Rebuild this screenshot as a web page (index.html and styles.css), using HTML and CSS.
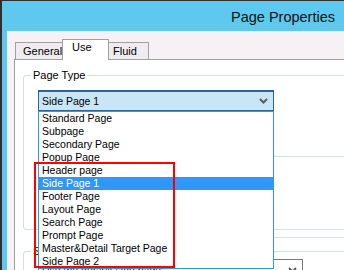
FILE: index.html
```html
<!DOCTYPE html>
<html lang="en">
<head>
    <meta charset="UTF-8">
    <title>Page Properties</title>
    <link rel="stylesheet" href="styles.css">
</head>
<body>

    <div class="window">
        <div class="titlebar">
            <span class="title">Page Properties</span>
        </div>

        <div class="client">
            <!-- tabs -->
            <div class="tabs">
                <div class="tab tab-first">General</div>
                <div class="tab active">Use</div>
                <div class="tab tab-last">Fluid</div>
            </div>

            <div class="panel">
                <fieldset class="group group-type">
                    <legend>Page Type</legend>
                    <div class="combo-wrap">
                        <div class="combo combo-open">
                            <span>Side Page 1</span>
                            <svg class="chevron" width="9" height="6" viewBox="0 0 9 6">
                                <polyline points="1,1 4.5,4.5 8,1" fill="none" stroke="#5c5c5c" stroke-width="2"/>
                            </svg>
                        </div>
                        <ul class="dropdown">
                            <li>Standard Page</li>
                            <li>Subpage</li>
                            <li>Secondary Page</li>
                            <li>Popup Page</li>
                            <li>Header page</li>
                            <li class="selected">Side Page 1</li>
                            <li>Footer Page</li>
                            <li>Layout Page</li>
                            <li>Search Page</li>
                            <li>Prompt Page</li>
                            <li>Master&amp;Detail Target Page</li>
                            <li>Side Page 2</li>
                        </ul>
                    </div>
                    <div class="divider"></div>
                </fieldset>

                <div class="rule"></div>

                <fieldset class="group group-settings">
                    <legend>Side Page</legend>
                    <div class="combo combo-plain">
                        <span>Use the default side page</span>
                        <svg class="chevron" width="9" height="6" viewBox="0 0 9 6">
                            <polyline points="1,1 4.5,4.5 8,1" fill="none" stroke="#5c5c5c" stroke-width="2"/>
                        </svg>
                    </div>
                </fieldset>
            </div>
        </div>

        <!-- red annotation box -->
        <div class="highlight"></div>
    </div>

</body>
</html>
```

FILE: styles.css
```css
:root {
    --frame-cyan: #5fc8ee;
    --frame-dark: #2e2e2e;
    --client-bg: #f5f1f5;
    --tab-border: #a0a0a0;
    --group-line: #d6dfe7;
    --list-border: #2a9ed8;
    --list-selected: #3196f5;
}

body {
    margin: 0;
    font-family: 'Liberation Sans', Arial, sans-serif;
    color: #000;
    overflow: hidden;
}

.window {
    position: relative;
    width: 344px;
    height: 270px;
    box-sizing: border-box;
    background: var(--frame-cyan);
    border-top: 1px solid var(--frame-dark);
    border-left: 2px solid var(--frame-dark);
    overflow: hidden;
}

/* title bar */
.titlebar {
    height: 30px;
    display: flex;
    justify-content: flex-end;
    align-items: center;
    padding: 2px 9px 0 0;
    box-sizing: border-box;
}

.title {
    font-size: 14.5px;
    color: #111;
}

/* client area */
.client {
    margin-left: 5px;
    height: 239px;
    background: var(--client-bg);
    padding-top: 8px;
    box-sizing: border-box;
    display: flex;
    flex-direction: column;
}

.tabs {
    display: flex;
    align-items: flex-end;
    height: 20px;
    padding-left: 8px;
    position: relative;
    z-index: 2;
}

.tab {
    height: 17px;
    box-sizing: border-box;
    border: 1px solid var(--tab-border);
    border-bottom: none;
    background: #efebef;
    font-size: 11px;
    line-height: 16px;
    padding-left: 7px;
}

.tab-first {
    width: 47px;
    border-right: none;
}

.tab.active {
    width: 47px;
    height: 21px;
    margin-bottom: -1px;
    background: #fff;
    padding-left: 9px;
    line-height: 14px;
}

.tab-last {
    width: 40px;
    border-left: none;
    padding-left: 4px;
}

.panel {
    flex: 1;
    margin-left: 7px;
    background: #fff;
    border-top: 1px solid var(--tab-border);
    border-left: 1px solid var(--tab-border);
    overflow: hidden;
}

/* group boxes */
.group {
    margin: 9px -30px 0 8px;
    border: 1px solid var(--group-line);
    border-radius: 3px;
    padding: 0 0 0 14px;
    min-width: 0;
}

.group legend {
    font-size: 11px;
    line-height: 13px;
    padding: 0 2px;
    margin-left: -7px;
}

.group-type {
    padding-bottom: 72px;
}

.combo-wrap {
    position: relative;
    width: 236px;
    margin-top: 8px;
}

.combo {
    height: 21px;
    box-sizing: border-box;
    display: flex;
    align-items: center;
    justify-content: space-between;
    padding: 0 5px 0 3px;
    font-size: 10.5px;
}

.combo-open {
    background: #c8e6f7;
    border: 1px solid #2f6495;
    border-top-width: 2px;
}

.combo-plain {
    width: 265px;
    border: 1px solid #7a7a7a;
    margin-top: 1px;
}

.chevron {
    flex-shrink: 0;
}

.dropdown {
    position: absolute;
    top: 21px;
    left: 0;
    width: 236px;
    box-sizing: border-box;
    margin: 0;
    padding: 0;
    list-style: none;
    background: #fff;
    border: 1px solid var(--list-border);
    z-index: 5;
}

.dropdown li {
    height: 13px;
    line-height: 13px;
    font-size: 10.5px;
    padding-left: 3px;
    white-space: nowrap;
}

.dropdown li.selected {
    background: var(--list-selected);
    color: #fff;
}

.divider {
    margin-top: 45px;
    height: 1px;
    background: var(--group-line);
    margin-right: -20px;
}

.rule {
    height: 1px;
    margin: 7px 0 0 40px;
    background: var(--group-line);
}

.group-settings {
    margin-top: 7px;
    padding-bottom: 20px;
}

/* red annotation */
.highlight {
    position: absolute;
    left: 32px;
    top: 161px;
    width: 141px;
    height: 106px;
    box-sizing: border-box;
    border: 2px solid #f00;
    z-index: 10;
}
```
